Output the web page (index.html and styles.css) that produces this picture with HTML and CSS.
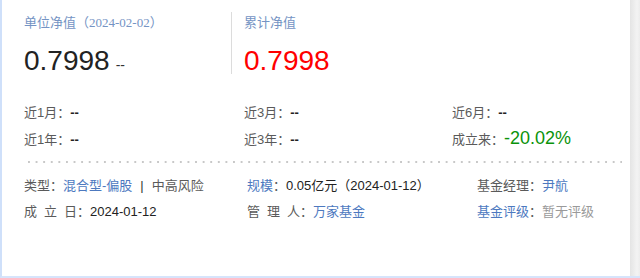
FILE: index.html
```html
<!DOCTYPE html>
<html lang="zh-CN">
<head>
    <meta charset="UTF-8">
    <meta name="viewport" content="width=device-width, initial-scale=1.0">
    <title>基金净值</title>
    <link rel="stylesheet" href="styles.css">
</head>
<body>
    <div class="frame">
        <div class="panel">
            <!-- net value -->
            <div class="nav-box">
                <div class="nav-item first">
                    <div class="nav-title">单位净值<span class="nav-date">（2024-02-02）</span></div>
                    <div class="nav-value">0.7998<span class="nav-change">--</span></div>
                </div>
                <div class="nav-item second">
                    <div class="nav-title">累计净值</div>
                    <div class="nav-value red">0.7998</div>
                </div>
            </div>

            <!-- returns -->
            <div class="returns">
                <div class="cell"><span class="label">近1月：</span><span class="val">--</span></div>
                <div class="cell"><span class="label">近3月：</span><span class="val">--</span></div>
                <div class="cell"><span class="label">近6月：</span><span class="val">--</span></div>
                <div class="cell"><span class="label">近1年：</span><span class="val">--</span></div>
                <div class="cell"><span class="label">近3年：</span><span class="val">--</span></div>
                <div class="cell"><span class="label">成立来：</span><span class="val green">-20.02%</span></div>
            </div>

            <div class="dots"></div>

            <!-- fund info -->
            <div class="info">
                <div class="cell"><span class="label">类型：</span><a class="link">混合型-偏股</a><span class="sep">|</span><span class="label">中高风险</span></div>
                <div class="cell"><a class="link">规模</a><span class="label">：</span><span class="val">0.05亿元（2024-01-12）</span></div>
                <div class="cell"><span class="label">基金经理：</span><a class="link">尹航</a></div>
                <div class="cell"><span class="label"><span class="spaced">成立</span>日：</span><span class="val">2024-01-12</span></div>
                <div class="cell"><span class="label"><span class="spaced">管理</span>人：</span><a class="link">万家基金</a></div>
                <div class="cell"><a class="link">基金评级</a><span class="label">：</span><span class="muted">暂无评级</span></div>
            </div>
        </div>
        <div class="scroll"></div>
    </div>
</body>
</html>
```

FILE: styles.css
```css
body {
    margin: 0;
    font-family: "Liberation Sans", "Noto Sans CJK SC", sans-serif;
    font-size: 13px;
    color: #333;
    background: #fff;
}

.frame {
    display: flex;
    width: 640px;
    height: 278px;
    box-sizing: border-box;
    border-left: 2px solid #cfe0fa;
    border-bottom: 2px solid #d6e4fb;
    overflow: hidden;
}

.panel {
    flex: 1;
    padding: 12px 0 0 22px;
}

.scroll {
    width: 10px;
    background: linear-gradient(to right, #e4e4e4, #f3f3f3 70%, #ececec);
}

.nav-box {
    display: flex;
    height: 62px;
}

.nav-item.first {
    width: 207px;
    border-right: 1px solid #dcdcdc;
}

.nav-item.second {
    padding-left: 12px;
}

.nav-title {
    color: #7594c4;
    font-size: 13px;
    line-height: 20px;
    margin-top: 1px;
}

.nav-date {
    font-family: "Liberation Serif", "Noto Sans CJK SC", serif;
    font-size: 13px;
}

.nav-value {
    margin-top: 14px;
    font-size: 28px;
    line-height: 28px;
    color: #222;
}

.nav-change {
    font-size: 14px;
    margin-left: 6px;
    color: #333;
}

.red {
    color: #ff0000;
}

.returns {
    display: grid;
    grid-template-columns: 220px 208px auto;
    grid-auto-rows: 27px;
    margin-top: 24px;
    align-items: center;
}

.label {
    color: #5a5a5a;
}

.val {
    color: #222;
}

.returns .val {
    font-weight: bold;
}

.returns .val.green {
    font-weight: normal;
    font-size: 18px;
    color: #0a930a;
}

.dots {
    margin: 9px 0 0 4px;
    width: 594px;
    height: 2px;
    background-image: linear-gradient(to right, #c8c8c8 2px, transparent 2px);
    background-size: 7.6px 2px;
}

.info {
    display: grid;
    grid-template-columns: 223px 230px auto;
    grid-auto-rows: 26px;
    margin-top: 8px;
    align-items: center;
}

.link {
    color: #4d79bf;
    cursor: pointer;
}

.sep {
    margin: 0 8px;
    color: #333;
}

.spaced {
    letter-spacing: 7px;
}

.muted {
    color: #9a9a9a;
}
```
